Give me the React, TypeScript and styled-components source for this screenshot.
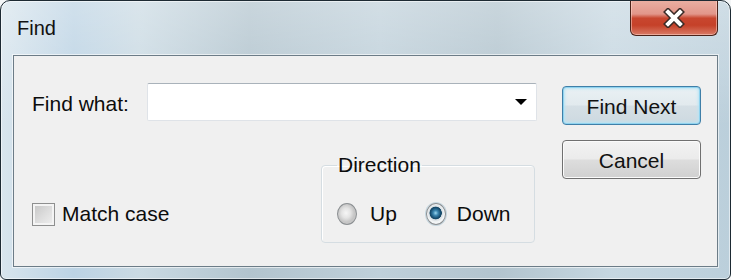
import React from 'react';
import styled, { createGlobalStyle } from 'styled-components';

const GlobalStyle = createGlobalStyle`
  html, body {
    margin: 0;
    padding: 0;
    background: #f4f6f7;
  }
  body {
    font-family: "Liberation Sans", Arial, sans-serif;
    font-size: 21px;
    color: #0c0c0c;
  }
`;

const Window = styled.div`
  width: 731px;
  height: 280px;
  box-sizing: border-box;
  display: flex;
  flex-direction: column;
  padding: 0 12px 12px 12px;
  border: 1px solid #1d2a33;
  border-radius: 10px 10px 6px 6px;
  background:
    linear-gradient(to bottom, rgba(255, 255, 255, 0.3), rgba(255, 255, 255, 0) 45%),
    linear-gradient(
      to right,
      #d8e5ed 0%,
      #bcd3e4 10%,
      #cadae3 19%,
      #b2c4ce 34%,
      #bfd0da 52%,
      #b2c4ce 68%,
      #c6d7e1 84%,
      #bbcfdb 100%
    );
  box-shadow: inset 0 0 0 1px rgba(255, 255, 255, 0.55);
  overflow: hidden;
`;

const TitleBar = styled.div`
  height: 54px;
  display: flex;
  justify-content: space-between;
  align-items: flex-start;
  flex-shrink: 0;
`;

const Title = styled.span`
  margin: 13px 0 0 4px;
  font-size: 20px;
  line-height: 28px;
  color: #111;
`;

const CloseButton = styled.div`
  width: 88px;
  height: 36px;
  margin-top: -1px;
  box-sizing: border-box;
  display: flex;
  align-items: center;
  justify-content: center;
  border: 1px solid #4a2219;
  border-top: none;
  border-radius: 0 0 6px 6px;
  background: linear-gradient(
    to bottom,
    #eab0a3 0%,
    #e2968a 40%,
    #c8462f 52%,
    #c54129 72%,
    #d97b66 100%
  );
  box-shadow: inset 0 0 0 1px rgba(255, 220, 210, 0.5);
`;

const Client = styled.div`
  flex: 1;
  display: flex;
  align-items: flex-start;
  padding: 27px 0 0 18px;
  background: #f0f0f0;
  border: 1px solid #6c7c87;
  box-shadow: 0 0 0 1px rgba(255, 255, 255, 0.6);
`;

const Main = styled.div`
  width: 505px;
  display: flex;
  flex-direction: column;
`;

const FindRow = styled.div`
  display: flex;
  align-items: center;
  height: 38px;
`;

const FieldLabel = styled.label`
  width: 115px;
  line-height: 28px;
  padding-top: 3px;
`;

const Combo = styled.div`
  width: 390px;
  height: 38px;
  box-sizing: border-box;
  display: flex;
  align-items: center;
  padding: 0 9px 0 6px;
  background: #fff;
  border: 1px solid #dfe3e8;
  border-top-color: #a9b2ba;
  border-radius: 2px;
`;

const ComboInput = styled.input`
  flex: 1;
  min-width: 0;
  border: none;
  outline: none;
  background: transparent;
  font: inherit;
`;

const DropArrow = styled.span`
  width: 0;
  height: 0;
  border-left: 6px solid transparent;
  border-right: 6px solid transparent;
  border-top: 6px solid #000;
`;

const BottomRow = styled.div`
  margin-top: 32px;
  height: 90px;
  display: flex;
  justify-content: space-between;
  align-items: flex-end;
`;

const CheckLabel = styled.label`
  display: flex;
  align-items: center;
  height: 28px;
  margin-bottom: 15px;
`;

const CheckBox = styled.span`
  width: 23px;
  height: 23px;
  box-sizing: border-box;
  margin-right: 7px;
  border: 1px solid #8e8f8f;
  background: linear-gradient(135deg, #c4c4c4 0%, #dcdcdc 50%, #f0f0f0 100%);
  box-shadow: inset 0 0 0 2px #f4f4f4;
`;

const GroupBox = styled.fieldset`
  box-sizing: border-box;
  width: 214px;
  height: 90px;
  margin: 0 2px 0 0;
  padding: 0 0 0 15px;
  border: 1px solid #d5dde2;
  border-radius: 4px;
  box-shadow: inset 1px 1px 0 #fff;
`;

const GroupLegend = styled.legend`
  padding: 0 1px;
  line-height: 24px;
`;

const RadioRow = styled.div`
  display: flex;
  align-items: center;
  height: 28px;
  margin-top: 23px;
`;

const RadioOption = styled.label<{ $gap: number }>`
  display: flex;
  align-items: center;
  margin-right: ${(p) => p.$gap}px;
`;

const RadioDot = styled.span<{ $checked?: boolean }>`
  width: 20px;
  height: 22px;
  box-sizing: border-box;
  margin-right: ${(p) => (p.$checked ? 11 : 13)}px;
  border-radius: 50%;
  border: 1px solid #8b8f92;
  background: ${(p) =>
    p.$checked
      ? 'radial-gradient(ellipse closest-side at 48% 45%, #9ad6ee 0%, #3b86b0 28%, #154a6c 60%, #1b4d6b 68%, #d6dde1 74%, #f3f5f6 100%)'
      : 'radial-gradient(ellipse closest-side at 45% 45%, #f6f6f6 0%, #e4e4e4 55%, #c6c6c6 100%)'};
  box-shadow: ${(p) => (p.$checked ? '0 0 0 1px #c5d6df' : 'none')};
`;

const ButtonColumn = styled.div`
  width: 139px;
  margin: 3px 0 0 25px;
  display: flex;
  flex-direction: column;
  gap: 15px;
`;

const Button = styled.button<{ $default?: boolean }>`
  height: 39px;
  width: 100%;
  padding: 2px 0 0;
  font: inherit;
  color: #111;
  border-radius: 4px;
  border: 1px solid ${(p) => (p.$default ? '#3f7fa8' : '#707070')};
  background: ${(p) =>
    p.$default
      ? 'linear-gradient(to bottom, #eaf1f4 0%, #e2eaee 48%, #d5dfe5 52%, #cdd9e0 100%)'
      : 'linear-gradient(to bottom, #f3f3f3 0%, #ebebeb 48%, #dddddd 52%, #d0d0d0 100%)'};
  box-shadow: ${(p) =>
    p.$default
      ? 'inset 0 0 0 1px #8fd3ef, inset 0 0 3px 2px #b9e4f5'
      : 'inset 0 0 0 1px #fbfbfb'};
`;

function CloseGlyph() {
  return (
    <svg width="26" height="20" viewBox="0 0 26 20">
      <path d="M7 4 L19 16 M19 4 L7 16" stroke="#3a2a26" strokeWidth="7" strokeLinecap="square" />
      <path d="M7 4 L19 16 M19 4 L7 16" stroke="#fff" strokeWidth="4" strokeLinecap="square" />
    </svg>
  );
}

export default function App() {
  return (
    <>
      <GlobalStyle />
      <Window>
        <TitleBar>
          <Title>Find</Title>
          <CloseButton>
            <CloseGlyph />
          </CloseButton>
        </TitleBar>
        <Client>
          <Main>
            <FindRow>
              <FieldLabel>Find what:</FieldLabel>
              <Combo>
                <ComboInput />
                <DropArrow />
              </Combo>
            </FindRow>
            <BottomRow>
              <CheckLabel>
                <CheckBox />
                Match case
              </CheckLabel>
              <GroupBox>
                <GroupLegend>Direction</GroupLegend>
                <RadioRow>
                  <RadioOption $gap={29}>
                    <RadioDot />
                    Up
                  </RadioOption>
                  <RadioOption $gap={0}>
                    <RadioDot $checked />
                    Down
                  </RadioOption>
                </RadioRow>
              </GroupBox>
            </BottomRow>
          </Main>
          <ButtonColumn>
            <Button $default>Find Next</Button>
            <Button>Cancel</Button>
          </ButtonColumn>
        </Client>
      </Window>
    </>
  );
}
